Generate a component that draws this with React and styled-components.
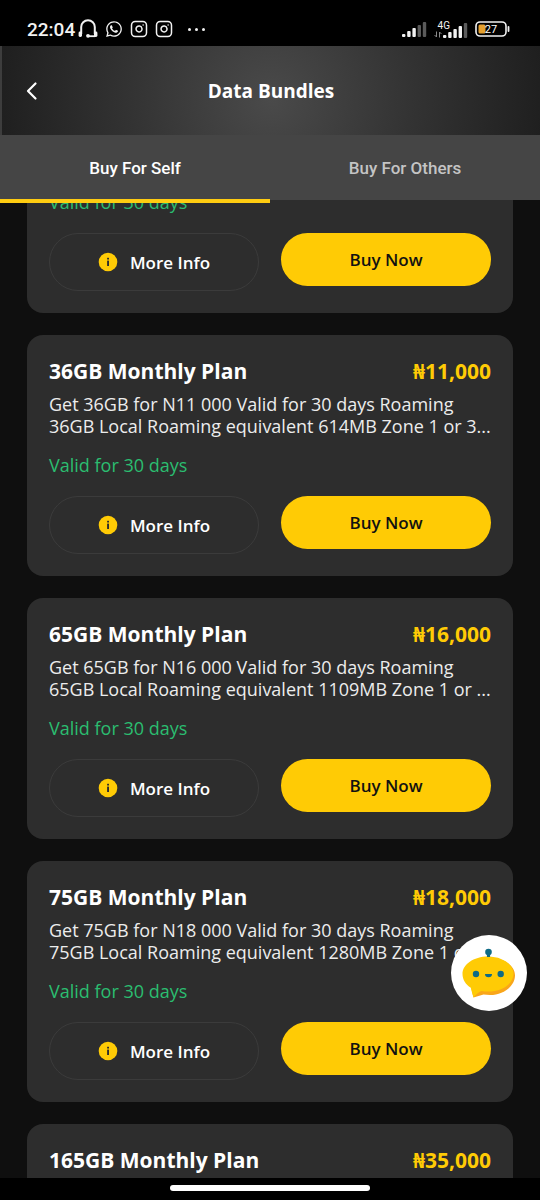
import React, { useLayoutEffect, useRef, useState } from "react";
import styled, { createGlobalStyle } from "styled-components";
import { Instagram } from "lucide-react";
import { FaWhatsapp } from "react-icons/fa6";

const plans = [
  { id: 1, validity: "Valid for 30 days" },
  {
    id: 2,
    name: "36GB Monthly Plan",
    price: "₦11,000",
    description:
      "Get 36GB for N11 000 Valid for 30 days Roaming\n36GB Local Roaming equivalent 614MB Zone 1 or 3...",
    validity: "Valid for 30 days",
  },
  {
    id: 3,
    name: "65GB Monthly Plan",
    price: "₦16,000",
    description:
      "Get 65GB for N16 000 Valid for 30 days Roaming\n65GB Local Roaming equivalent 1109MB Zone 1 or ...",
    validity: "Valid for 30 days",
  },
  {
    id: 4,
    name: "75GB Monthly Plan",
    price: "₦18,000",
    description:
      "Get 75GB for N18 000 Valid for 30 days Roaming\n75GB Local Roaming equivalent 1280MB Zone 1 or ...",
    validity: "Valid for 30 days",
  },
  {
    id: 5,
    name: "165GB Monthly Plan",
    price: "₦35,000",
    validity: "Valid for 30 days",
  },
];

const tabs = ["Buy For Self", "Buy For Others"];

const HeadsetIcon = () => (
  <svg width="20" height="20" viewBox="0 0 20 20" fill="none" aria-hidden="true">
    <path d="M3.200 15V8a6.800 6.800 0 0 1 13.600 0v7" stroke="#f2f2f2" strokeWidth="2" />
    <rect x="0.600" y="12.500" width="3.400" height="5.500" rx="1.400" fill="#f2f2f2" />
    <rect x="16" y="12.500" width="3.400" height="5.500" rx="1.400" fill="#f2f2f2" />
    <path d="M17 17.200h-7" stroke="#f2f2f2" strokeWidth="1.800" />
    <circle cx="10" cy="16.800" r="1.900" fill="#f2f2f2" />
  </svg>
);

const SignalIcon = ({ active }) => (
  <svg width="25" height="15" viewBox="0 0 25 15" aria-hidden="true">
    {[3, 6, 9, 12, 15].map((h, i) => (
      <rect
        key={h}
        x={i * 5.2}
        y={15 - h}
        width="3.400"
        height={h}
        rx="1"
        fill={i < active ? "#f2f2f2" : "#5a5a5a"}
      />
    ))}
  </svg>
);

const DataArrows = () => (
  <svg width="8" height="7" viewBox="0 0 8 7" fill="none" stroke="#8a8a8a" aria-hidden="true">
    <path d="M2.500 0.500v5.500L0.500 4M5.500 6.500V1L7.500 3" />
  </svg>
);

const BatteryIcon = () => (
  <svg width="35" height="16" viewBox="0 0 35 16" aria-hidden="true">
    <rect x="1" y="1" width="30" height="14" rx="4" fill="none" stroke="#f2f2f2" strokeWidth="1.600" />
    <rect x="3.500" y="3.500" width="7" height="9" rx="1.500" fill="#e5a02e" />
    <path d="M33.500 6v4" stroke="#f2f2f2" strokeWidth="1.800" strokeLinecap="round" />
    <text x="16" y="12" textAnchor="middle" fontFamily="Roboto, sans-serif" fontSize="11" fill="#fff">
      27
    </text>
  </svg>
);

const BackIcon = () => (
  <svg width="12" height="20" viewBox="0 0 12 20" fill="none" aria-hidden="true">
    <path
      d="M9.500 2.500L2 10l7.500 7.500"
      stroke="#fff"
      strokeWidth="2.200"
      strokeLinecap="round"
      strokeLinejoin="round"
    />
  </svg>
);

const InfoIcon = () => (
  <svg width="20" height="20" viewBox="0 0 20 20" aria-hidden="true">
    <circle cx="10" cy="10" r="9.300" fill="#ffcb05" />
    <rect x="9.100" y="8.600" width="1.900" height="5.400" fill="#2d2d2d" />
    <rect x="9.100" y="5.800" width="1.900" height="1.700" fill="#2d2d2d" />
  </svg>
);

const BotIcon = () => (
  <svg width="76" height="76" viewBox="0 0 76 76" aria-hidden="true">
    <path
      d="M39 23c14 0 25 7.500 25 17.500S53 60 39 60c-2.500 0-4.500-.1-6.500-.4L22.500 62.500 20 52z"
      fill="#f9a61a"
    />
    <path
      d="M37 21.500c14.500 0 25.500 8 25.500 17.500S51.500 56.500 37 56.500c-2.300 0-4.600-.2-6.700-.6-2.600.9-4.500 2.800-7.800 6.600-.9-3-1.800-6-2.700-9.800C14.600 49.500 11.500 44.500 11.500 39c0-9.500 11-17.500 25.500-17.500z"
      fill="#ffcb05"
    />
    <path d="M37.500 17v5" stroke="#0f6b86" strokeWidth="3.200" />
    <circle cx="37.500" cy="17" r="3.300" fill="#0f6b86" />
    <circle cx="25" cy="39" r="3.200" fill="#0f6b86" />
    <circle cx="49.700" cy="39" r="3.200" fill="#0f6b86" />
    <path d="M34 39h7a3.500 3.200 0 0 1-7 0z" fill="#0f6b86" />
  </svg>
);

const PlanCard = ({ plan }) => (
  <Card>
    {plan.name && (
      <CardHead>
        <PlanName>{plan.name}</PlanName>
        <Price>{plan.price}</Price>
      </CardHead>
    )}
    {plan.description && <Description>{plan.description}</Description>}
    <Validity>{plan.validity}</Validity>
    <Actions>
      <InfoButton type="button">
        <InfoIcon />
        More Info
      </InfoButton>
      <BuyButton type="button">Buy Now</BuyButton>
    </Actions>
  </Card>
);

const App = () => {
  const [activeTab, setActiveTab] = useState(tabs[0]);
  const listRef = useRef(null);

  // start with the first plan scrolled half under the tabs
  useLayoutEffect(() => {
    listRef.current.scrollTop = 54;
  }, []);

  return (
    <Page>
      <GlobalStyle />
      <StatusBar>
        <StatusGroup>
          <Clock>22:04</Clock>
          <HeadsetIcon />
          <FaWhatsapp size={18} />
          <Instagram size={18} />
          <Instagram size={18} />
          <Dots>
            <i />
            <i />
            <i />
          </Dots>
        </StatusGroup>
        <StatusGroup>
          <SignalIcon active={3} />
          <Network>
            <NetworkType>
              4G
              <DataArrows />
            </NetworkType>
            <SignalIcon active={4} />
          </Network>
          <BatteryIcon />
        </StatusGroup>
      </StatusBar>

      <Header>
        <BackButton type="button" aria-label="Back">
          <BackIcon />
        </BackButton>
        <Title>Data Bundles</Title>
      </Header>

      <Tabs role="tablist">
        {tabs.map((tab) => (
          <Tab
            key={tab}
            type="button"
            role="tab"
            aria-selected={tab === activeTab}
            $active={tab === activeTab}
            onClick={() => setActiveTab(tab)}
          >
            {tab}
          </Tab>
        ))}
      </Tabs>

      <PlanList ref={listRef}>
        {plans.map((plan) => (
          <PlanCard key={plan.id} plan={plan} />
        ))}
      </PlanList>

      <ChatButton type="button" aria-label="Chat">
        <BotIcon />
      </ChatButton>
      <NavBar>
        <NavHandle />
      </NavBar>
    </Page>
  );
};

const GlobalStyle = createGlobalStyle`
  * {
    box-sizing: border-box;
    margin: 0;
    padding: 0;
  }

  body {
    background: #0f0f0f;
    font-family: "Open Sans", "Noto Sans", sans-serif;
  }

  button {
    border: none;
    background: none;
    font-family: inherit;
    cursor: pointer;
  }
`;

const Page = styled.div`
  position: relative;
  display: flex;
  flex-direction: column;
  height: 100vh;
  overflow: hidden;
  color: #fff;
`;

const StatusBar = styled.div`
  display: flex;
  justify-content: space-between;
  flex-shrink: 0;
  height: 46px;
  padding: 12px 30px 0 27px;
  background: #000;
  color: #f2f2f2;
  font-family: Roboto, sans-serif;
`;

const StatusGroup = styled.div`
  display: flex;
  align-items: center;
  gap: 7px;
  height: 34px;
`;

const Clock = styled.span`
  margin-right: -4px;
  font-size: 19px;
  font-weight: 500;
`;

const Dots = styled.span`
  display: flex;
  gap: 4px;
  margin-left: 8px;

  i {
    width: 3px;
    height: 3px;
    border-radius: 50%;
    background: #f2f2f2;
  }
`;

const Network = styled.div`
  display: flex;
  align-items: flex-end;
`;

const NetworkType = styled.span`
  display: flex;
  flex-direction: column;
  align-items: flex-end;
  width: 16px;
  margin-right: -7px;
  font-size: 10px;
  line-height: 10px;

  svg {
    align-self: flex-start;
  }
`;

const Header = styled.header`
  display: grid;
  grid-template-columns: 60px 1fr 60px;
  align-items: center;
  flex-shrink: 0;
  height: 89px;
  border-left: 2px solid #3d3d3d;
  background: radial-gradient(circle at 50% 60%, #4a4a4a 0, #333 140px, #1e1e1e 280px);
`;

const BackButton = styled.button`
  display: flex;
  justify-content: center;
`;

const Title = styled.h1`
  font-size: 19px;
  font-weight: 700;
  text-align: center;
`;

const Tabs = styled.div`
  display: flex;
  flex-shrink: 0;
  height: 65px;
  background: #454545;
`;

const Tab = styled.button`
  position: relative;
  flex: 1;
  color: ${({ $active }) => ($active ? "#fff" : "#c4c4c4")};
  font-family: Roboto, sans-serif;
  font-size: 17px;
  font-weight: 500;

  &::after {
    content: "";
    display: ${({ $active }) => ($active ? "block" : "none")};
    position: absolute;
    z-index: 1;
    left: 0;
    bottom: -3px;
    width: 100%;
    height: 4px;
    background: #fc1;
  }
`;

const PlanList = styled.main`
  display: flex;
  flex: 1;
  flex-direction: column;
  gap: 22px;
  min-height: 0;
  padding: 22px 27px;
  overflow-y: auto;
  scrollbar-width: none;
`;

const Card = styled.article`
  flex-shrink: 0;
  padding: 22px;
  border-radius: 16px;
  background: #2d2d2d;
`;

const CardHead = styled.div`
  display: flex;
  justify-content: space-between;
  margin-bottom: 8px;
  font-size: 21px;
  line-height: 28px;
`;

const PlanName = styled.h2`
  font-size: inherit;
  font-weight: 700;
`;

const Price = styled.strong`
  color: #ffcb05;
  font-weight: 700;
`;

const Description = styled.p`
  margin-bottom: 16px;
  color: #ececec;
  font-size: 18px;
  line-height: 22px;
  white-space: pre;
`;

const Validity = styled.p`
  margin-bottom: 19px;
  color: #2bbd70;
  font-size: 18px;
  line-height: 24px;
`;

const Actions = styled.div`
  display: grid;
  grid-template-columns: 1fr 1fr;
  align-items: start;
  gap: 22px;
`;

const ActionButton = styled.button`
  display: flex;
  align-items: center;
  justify-content: center;
  border-radius: 30px;
  font-size: 17px;
  font-weight: 600;
`;

const InfoButton = styled(ActionButton)`
  gap: 12px;
  height: 58px;
  border: 1px solid #3b3b3b;
  color: #fff;
`;

const BuyButton = styled(ActionButton)`
  height: 53px;
  background: #ffcb05;
  color: #111;
`;

const ChatButton = styled.button`
  position: absolute;
  right: 13px;
  bottom: 189px;
  display: flex;
  border-radius: 50%;
  background: #fff;
`;

const NavBar = styled.div`
  display: flex;
  justify-content: center;
  flex-shrink: 0;
  height: 22px;
  padding-top: 7px;
  background: #000;
`;

const NavHandle = styled.span`
  width: 37%;
  height: 6px;
  border-radius: 3px;
  background: #fff;
`;

export default App;
